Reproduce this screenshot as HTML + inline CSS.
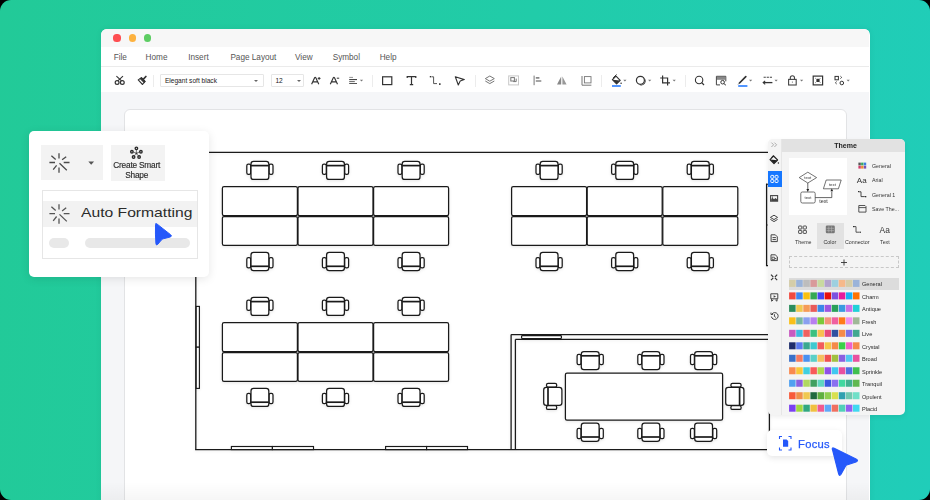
<!DOCTYPE html>
<html><head><meta charset="utf-8">
<style>
*{box-sizing:border-box}
html,body{margin:0;padding:0}
body{width:930px;height:500px;overflow:hidden;position:relative;background:#000;font-family:"Liberation Sans",sans-serif}
.abs{position:absolute}
#bg{position:absolute;left:0;top:0;width:930px;height:500px;border-radius:11px;background:linear-gradient(95deg,#22ca98 0%,#21cca9 55%,#20cdb9 100%)}
#win{position:absolute;left:101px;top:29px;width:768.5px;height:490px;background:#fff;border-radius:6px 6px 0 0;overflow:hidden;box-shadow:0 0 6px rgba(0,0,0,.06)}
#title{position:absolute;left:0;top:0;width:768px;height:18px;background:#f7f7f7}
.dot{position:absolute;top:5.4px;width:7.2px;height:7.2px;border-radius:50%}
#menu{position:absolute;left:0;top:18px;width:768px;height:20px;background:#fff;border-bottom:1px solid #ebebeb}
.mi{position:absolute;top:6.0px;font-size:8.2px;color:#555;white-space:nowrap}
#tb{position:absolute;left:0;top:38px;width:768px;height:25px;background:#fff}
#canvas{position:absolute;left:0;top:63px;width:768px;height:440px;background:#f5f6f8}
#page{position:absolute;left:22.5px;top:17px;width:723.5px;height:420px;background:#fff;border-radius:6px;border:1px solid #e2e3e5}
.sep{position:absolute;top:8px;width:1px;height:12px;background:#ececec}
.dd{position:absolute;top:8px;height:13px;border:1px solid #e6e6e6;border-radius:1px;background:#fff;font-size:6.6px;color:#222;padding:2.4px 0 0 3.9px;white-space:nowrap}
.caret{position:absolute;width:0;height:0;border-left:2px solid transparent;border-right:2px solid transparent;border-top:2px solid #666}
svg.ic{position:absolute}
#plan{position:absolute;left:0;top:0}
#lp{position:absolute;left:29px;top:131px;width:180px;height:146px;background:#fff;border-radius:5px;box-shadow:0 2px 10px rgba(0,0,0,.10)}
#tp{position:absolute;left:768px;top:139px;width:136.5px;height:275.5px;background:#f4f4f4;border-radius:5px;box-shadow:0 2px 5px rgba(0,0,0,.07);overflow:hidden}
.swl{position:absolute;left:862px;font-size:5.6px;color:#2a2a2a;white-space:nowrap}
.tl{position:absolute;font-size:5.3px;color:#333;white-space:nowrap}
#focus{position:absolute;left:767px;top:430.2px;width:75px;height:25.8px;background:#fff;border-radius:5px;box-shadow:0 2px 6px rgba(0,0,0,.10)}
</style></head><body>
<div id="bg"></div>
<div id="win">
  <div id="title">
    <div class="dot" style="left:12.4px;background:#fe4f52"></div>
    <div class="dot" style="left:27.6px;background:#fdb23f"></div>
    <div class="dot" style="left:42.9px;background:#5dcd63"></div>
  </div>
  <div id="menu">
    <div class="mi" style="left:12.7px">File</div>
    <div class="mi" style="left:44.6px">Home</div>
    <div class="mi" style="left:87.2px">Insert</div>
    <div class="mi" style="left:129.4px">Page Layout</div>
    <div class="mi" style="left:194px">View</div>
    <div class="mi" style="left:231.7px">Symbol</div>
    <div class="mi" style="left:278.7px">Help</div>
  </div>
  <div id="tb"></div>
  <div id="canvas"><div id="page"></div></div>
</div>

<div class="abs" style="left:101px;top:482px;width:768px;height:18px;background:linear-gradient(rgba(0,0,0,0),rgba(0,0,0,.035))"></div>
<!-- toolbar overlay in page coords -->
<div class="abs" style="left:0;top:0;width:930px;height:100px">
  <div class="sep" style="left:153px;top:74.5px"></div>
  <div class="dd" style="left:160px;top:74px;width:103.5px">Elegant soft black</div>
  <div class="caret" style="left:254.3px;top:79.8px"></div>
  <div class="dd" style="left:270.5px;top:74px;width:33px">12</div>
  <div class="caret" style="left:297.4px;top:79.8px"></div>
  <div class="sep" style="left:371.5px;top:74.5px"></div>
  <div class="sep" style="left:474.5px;top:74.5px"></div>
  <div class="sep" style="left:601px;top:74.5px"></div>
  <div class="sep" style="left:684.5px;top:74.5px"></div>
  <svg class="ic" style="left:0;top:0" width="930" height="100" viewBox="0 0 930 100" fill="none" stroke="#333" stroke-width="1.1">
    <!-- scissors -->
    <circle cx="117.1" cy="82.5" r="1.9" stroke-width="1.2"/><circle cx="122.3" cy="82.5" r="1.9" stroke-width="1.2"/>
    <path d="M117.8 80.8 L123 76.2 M121.6 80.8 L116.4 76.2" stroke-width="1.1"/>
    <!-- brush -->
    <path d="M138.2 79.9 L142.5 84.5 L145 81.4 L141.5 77.8 Z" stroke-width="1.1" stroke-linejoin="round"/>
    <path d="M140.3 78.6 L141.5 77.8 L145 81.4 L144.1 82.4 Z" fill="#333"/>
    <path d="M143.2 79.3 L145.9 76.5" stroke-width="1.7" stroke-linecap="round"/>
    <!-- A+ A- -->
    <path d="M311.6 84.3 L314.6 77.8 Q315.2 76.8 315.8 77.8 L318.8 84.3 M312.9 81.8 L317.5 81.8" stroke-width="1.15"/>
    <path d="M317.7 78.4 h2.8 M319.1 77 v2.8" stroke-width="1"/>
    <path d="M330.3 84.3 L333.3 77.8 Q333.9 76.8 334.5 77.8 L337.5 84.3 M331.6 81.8 L336.2 81.8" stroke-width="1.15"/>
    <path d="M336.8 78.2 h2.4" stroke-width="1"/>
    <!-- align -->
    <path d="M349.2 77.4 h3.8" stroke="#888" stroke-width=".9"/>
    <path d="M349.2 79.6 h7.8" stroke="#333" stroke-width="1"/>
    <path d="M349.2 81.6 h5.6" stroke="#666" stroke-width="1"/>
    <path d="M349.2 83.5 h7.8" stroke="#555" stroke-width="1"/>
    <path d="M359.9 79.8 h3.2 l-1.6 1.7z" fill="#777" stroke="none"/>
    <!-- rect -->
    <rect x="382.6" y="76.8" width="9.2" height="7.8" stroke-width="1.2"/>
    <!-- T -->
    <path d="M407.2 78 v-1.3 h8.6 v1.3 M411.5 76.7 v8 M409.8 84.7 h3.4" stroke-width="1.2"/>
    <!-- connector -->
    <path d="M431.6 76.8 h2 v6.8 h3.4" stroke="#555" stroke-width="1"/>
    <rect x="429.8" y="76" width="1.4" height="1.4" fill="#333" stroke="none"/><rect x="439" y="83.3" width="1.6" height="1.6" fill="#333" stroke="none"/>
    <!-- pointer -->
    <path d="M455.3 76.8 L464.3 79.6 L460.2 81 L458.3 85 Z" stroke-width="1.1" stroke-linejoin="round"/>
    <!-- layers -->
    <path d="M489.8 76 L494.3 78.6 L489.8 81.2 L485.3 78.6 Z" stroke="#777" stroke-width="1"/>
    <path d="M485.3 81 L489.8 83.6 L494.3 81" stroke="#777" stroke-width="1"/>
    <!-- group -->
    <rect x="508.7" y="75.9" width="9.8" height="9" stroke="#c8c8c8" stroke-width="1"/>
    <rect x="510.8" y="77.6" width="3.6" height="3.4" stroke="#777" stroke-width="1"/>
    <path d="M513.2 81.6 h3 v-3" stroke="#777" stroke-width="1"/>
    <!-- align left -->
    <path d="M534.1 75.6 v9.6" stroke="#777" stroke-width="1"/>
    <path d="M535.8 77.9 h3.6 M535.8 81 h5.5" stroke="#888" stroke-width="1.7"/>
    <!-- flip -->
    <path d="M561.2 76.6 L557 84.5 h4.2z" fill="#888" stroke="none"/>
    <path d="M562.4 76.6 L566.6 84.5 h-4.2z" fill="#999" stroke="none"/>
    <!-- frame -->
    <path d="M582 76 v9.2 h9.4" stroke="#777" stroke-width="1"/>
    <rect x="584.4" y="76.6" width="6.6" height="6.3" stroke="#777" stroke-width=".9"/>
    <!-- bucket -->
    <path d="M613.4 77.6 L616.3 74.8" stroke="#333" stroke-width="1" stroke-linecap="round"/>
    <path d="M616 76.1 L620.2 80.3 L616.6 83.9 L612.4 79.7 Z" stroke="#333" stroke-width="1.2" stroke-linejoin="round"/>
    <path d="M612.6 79.8 L620 80.4 L616.6 83.8Z" fill="#333" stroke="none"/>
    <circle cx="621.1" cy="83.3" r=".8" fill="#333" stroke="none"/>
    <path d="M612 86 h8.8" stroke="#1a73ff" stroke-width="1.5"/>
    <path d="M623.3 79.8 h3.2 l-1.6 1.7z" fill="#777" stroke="none"/>
    <!-- shadow circle -->
    <circle cx="640.4" cy="80.3" r="4" stroke-width="1.2"/>
    <path d="M643.6 77.3 A4.3 4.3 0 0 1 639 84.8 A4.7 4.7 0 0 0 645 80.8 A4.5 4.5 0 0 0 643.6 77.3Z" fill="#333" stroke="none"/>
    <path d="M648.1 79.8 h3.2 l-1.6 1.7z" fill="#777" stroke="none"/>
    <!-- crop -->
    <path d="M662.6 75.6 v7.2 h7.4 M660.2 78 h7.4 v7.4" stroke-width="1.2"/>
    <path d="M672.6 79.8 h3.2 l-1.6 1.7z" fill="#777" stroke="none"/>
    <!-- search -->
    <circle cx="699.1" cy="80" r="3.7" stroke-width="1.1"/>
    <path d="M701.7 82.6 L704 85" stroke-width="1.2"/>
    <!-- find doc -->
    <path d="M720 84.9 h-3.6 v-8.6 h9.4 v5" stroke="#444" stroke-width="1"/>
    <rect x="717" y="76.8" width="8.4" height="3" fill="#888" stroke="none"/>
    <circle cx="722.6" cy="82.2" r="1.8" stroke-width="1"/>
    <path d="M723.9 83.6 l2 1.6" stroke-width="1"/>
    <!-- pen -->
    <path d="M739.5 83 L745.8 76.6" stroke-width="1.7" stroke-linecap="round"/>
    <path d="M738.2 84.4 L739.3 83.2" stroke="#666" stroke-width="1"/>
    <path d="M738.2 86 h9.2" stroke="#1a73ff" stroke-width="1.5"/>
    <path d="M749 79.8 h3.2 l-1.6 1.7z" fill="#777" stroke="none"/>
    <!-- line style -->
    <path d="M763.6 77.3 h8.6" stroke-dasharray="2.2 .9" stroke="#444" stroke-width="1.1"/>
    <path d="M763.6 82.6 h8.8" stroke-width="1.3"/>
    <path d="M765.2 80.9 L763.2 82.6 L765.2 84.3" stroke-width="1.1"/>
    <path d="M774.5 79.8 h3.2 l-1.6 1.7z" fill="#777" stroke="none"/>
    <!-- lock -->
    <rect x="788.6" y="79.4" width="7.6" height="5.6" stroke="#444" stroke-width="1.1"/>
    <path d="M790.3 79.4 v-1.6 a2.1 2.1 0 0 1 4.2 0 v1.6" stroke="#444" stroke-width="1.1"/>
    <rect x="791.9" y="81.6" width="1" height="1" fill="#666" stroke="none"/>
    <path d="M800 79.8 h3.2 l-1.6 1.7z" fill="#777" stroke="none"/>
    <!-- fit -->
    <rect x="813.2" y="76.1" width="9.4" height="8.8" stroke-width="1.2"/>
    <rect x="816.4" y="78.8" width="3.2" height="3.2" fill="#333" stroke="none"/>
    <path d="M815.2 78 l.6 .6 M820.6 78 l-.6 .6 M815.2 82.9 l.6 -.6 M820.6 82.9 l-.6 -.6" stroke-width=".8"/>
    <!-- more -->
    <rect x="835" y="76.4" width="3.4" height="3.4" stroke-width="1"/>
    <circle cx="841.8" cy="83" r="1.8" stroke-width="1"/>
    <path d="M840.4 76.2 l1.3 1.2 l-1.3 1.2 M836.7 81.6 l-1.3 1.2 l1.3 1.2" stroke-width=".9"/>
    <path d="M846.6 79.8 h3.2 l-1.6 1.7z" fill="#777" stroke="none"/>
  </svg>
</div>

<svg id="plan" width="930" height="500" viewBox="0 0 930 500">

<g style="filter:drop-shadow(0 1.5px 1.5px rgba(0,0,0,.08))">
<g fill="none" stroke="#1a1a1a" stroke-width="1.3">
<line x1="195.8" y1="152.4" x2="768" y2="152.4"/>
<line x1="195.8" y1="152.4" x2="195.8" y2="449.6"/>
<line x1="195.1" y1="449.6" x2="768" y2="449.6"/>
<line x1="511.1" y1="334.6" x2="768" y2="334.6"/>
<line x1="515.4" y1="339.4" x2="768" y2="339.4"/>
<line x1="511.1" y1="334.6" x2="511.1" y2="449.6"/>
<line x1="515.4" y1="339.4" x2="515.4" y2="449.6"/>
<line x1="766.6" y1="183.7" x2="766.6" y2="266"/>
<path d="M766 184.2 h2.5 M766 265.6 h2.5 M766 225 h1.6" stroke-width="1.1"/>
<line x1="769.4" y1="339.4" x2="769.4" y2="449.6"/>
</g>
<g fill="#fff" stroke="#1a1a1a" stroke-width="1.15">
<rect x="196.2" y="306.4" width="3.2" height="40.8"/>
<rect x="196.2" y="347.2" width="3.2" height="41.2"/>
<rect x="231.4" y="446.5" width="41" height="3.1"/>
<rect x="272.4" y="446.5" width="41.1" height="3.1"/>
<rect x="385.6" y="446.5" width="41" height="3.1"/>
<rect x="426.6" y="446.5" width="40.9" height="3.1"/>
<rect x="521.6" y="335.7" width="39.8" height="2.9" rx=".8" stroke-width="1.2"/>
</g></g>
<g fill="#fff" stroke="#1a1a1a" stroke-width="1.25" style="filter:drop-shadow(0 1.5px 1.5px rgba(0,0,0,.10))"><rect x="222.4" y="186.6" width="75" height="29.0" rx="1.6"/><rect x="222.4" y="216.5" width="75" height="28.9" rx="1.6"/><g transform="translate(259.9,170.4) rotate(0)"><rect x="-13.1" y="-6.3" width="3.9" height="10.2" rx="1.6"/><rect x="9.2" y="-6.3" width="3.9" height="10.2" rx="1.6"/><rect x="-8.9" y="-9.1" width="17.8" height="18.2" rx="2.6"/><line x1="-8.9" y1="-4.8" x2="8.9" y2="-4.8" stroke-width="1.7"/></g><g transform="translate(259.9,261.5) rotate(180)"><rect x="-13.1" y="-6.3" width="3.9" height="10.2" rx="1.6"/><rect x="9.2" y="-6.3" width="3.9" height="10.2" rx="1.6"/><rect x="-8.9" y="-9.1" width="17.8" height="18.2" rx="2.6"/><line x1="-8.9" y1="-4.8" x2="8.9" y2="-4.8" stroke-width="1.7"/></g><rect x="298.0" y="186.6" width="75" height="29.0" rx="1.6"/><rect x="298.0" y="216.5" width="75" height="28.9" rx="1.6"/><g transform="translate(335.5,170.4) rotate(0)"><rect x="-13.1" y="-6.3" width="3.9" height="10.2" rx="1.6"/><rect x="9.2" y="-6.3" width="3.9" height="10.2" rx="1.6"/><rect x="-8.9" y="-9.1" width="17.8" height="18.2" rx="2.6"/><line x1="-8.9" y1="-4.8" x2="8.9" y2="-4.8" stroke-width="1.7"/></g><g transform="translate(335.5,261.5) rotate(180)"><rect x="-13.1" y="-6.3" width="3.9" height="10.2" rx="1.6"/><rect x="9.2" y="-6.3" width="3.9" height="10.2" rx="1.6"/><rect x="-8.9" y="-9.1" width="17.8" height="18.2" rx="2.6"/><line x1="-8.9" y1="-4.8" x2="8.9" y2="-4.8" stroke-width="1.7"/></g><rect x="373.6" y="186.6" width="75" height="29.0" rx="1.6"/><rect x="373.6" y="216.5" width="75" height="28.9" rx="1.6"/><g transform="translate(411.1,170.4) rotate(0)"><rect x="-13.1" y="-6.3" width="3.9" height="10.2" rx="1.6"/><rect x="9.2" y="-6.3" width="3.9" height="10.2" rx="1.6"/><rect x="-8.9" y="-9.1" width="17.8" height="18.2" rx="2.6"/><line x1="-8.9" y1="-4.8" x2="8.9" y2="-4.8" stroke-width="1.7"/></g><g transform="translate(411.1,261.5) rotate(180)"><rect x="-13.1" y="-6.3" width="3.9" height="10.2" rx="1.6"/><rect x="9.2" y="-6.3" width="3.9" height="10.2" rx="1.6"/><rect x="-8.9" y="-9.1" width="17.8" height="18.2" rx="2.6"/><line x1="-8.9" y1="-4.8" x2="8.9" y2="-4.8" stroke-width="1.7"/></g><rect x="511.6" y="186.6" width="75" height="29.0" rx="1.6"/><rect x="511.6" y="216.5" width="75" height="28.9" rx="1.6"/><g transform="translate(549.1,170.4) rotate(0)"><rect x="-13.1" y="-6.3" width="3.9" height="10.2" rx="1.6"/><rect x="9.2" y="-6.3" width="3.9" height="10.2" rx="1.6"/><rect x="-8.9" y="-9.1" width="17.8" height="18.2" rx="2.6"/><line x1="-8.9" y1="-4.8" x2="8.9" y2="-4.8" stroke-width="1.7"/></g><g transform="translate(549.1,261.5) rotate(180)"><rect x="-13.1" y="-6.3" width="3.9" height="10.2" rx="1.6"/><rect x="9.2" y="-6.3" width="3.9" height="10.2" rx="1.6"/><rect x="-8.9" y="-9.1" width="17.8" height="18.2" rx="2.6"/><line x1="-8.9" y1="-4.8" x2="8.9" y2="-4.8" stroke-width="1.7"/></g><rect x="587.2" y="186.6" width="75" height="29.0" rx="1.6"/><rect x="587.2" y="216.5" width="75" height="28.9" rx="1.6"/><g transform="translate(624.7,170.4) rotate(0)"><rect x="-13.1" y="-6.3" width="3.9" height="10.2" rx="1.6"/><rect x="9.2" y="-6.3" width="3.9" height="10.2" rx="1.6"/><rect x="-8.9" y="-9.1" width="17.8" height="18.2" rx="2.6"/><line x1="-8.9" y1="-4.8" x2="8.9" y2="-4.8" stroke-width="1.7"/></g><g transform="translate(624.7,261.5) rotate(180)"><rect x="-13.1" y="-6.3" width="3.9" height="10.2" rx="1.6"/><rect x="9.2" y="-6.3" width="3.9" height="10.2" rx="1.6"/><rect x="-8.9" y="-9.1" width="17.8" height="18.2" rx="2.6"/><line x1="-8.9" y1="-4.8" x2="8.9" y2="-4.8" stroke-width="1.7"/></g><rect x="662.8" y="186.6" width="75" height="29.0" rx="1.6"/><rect x="662.8" y="216.5" width="75" height="28.9" rx="1.6"/><g transform="translate(700.3,170.4) rotate(0)"><rect x="-13.1" y="-6.3" width="3.9" height="10.2" rx="1.6"/><rect x="9.2" y="-6.3" width="3.9" height="10.2" rx="1.6"/><rect x="-8.9" y="-9.1" width="17.8" height="18.2" rx="2.6"/><line x1="-8.9" y1="-4.8" x2="8.9" y2="-4.8" stroke-width="1.7"/></g><g transform="translate(700.3,261.5) rotate(180)"><rect x="-13.1" y="-6.3" width="3.9" height="10.2" rx="1.6"/><rect x="9.2" y="-6.3" width="3.9" height="10.2" rx="1.6"/><rect x="-8.9" y="-9.1" width="17.8" height="18.2" rx="2.6"/><line x1="-8.9" y1="-4.8" x2="8.9" y2="-4.8" stroke-width="1.7"/></g><rect x="222.4" y="322.6" width="75" height="29.0" rx="1.6"/><rect x="222.4" y="352.5" width="75" height="28.9" rx="1.6"/><g transform="translate(259.9,306.4) rotate(0)"><rect x="-13.1" y="-6.3" width="3.9" height="10.2" rx="1.6"/><rect x="9.2" y="-6.3" width="3.9" height="10.2" rx="1.6"/><rect x="-8.9" y="-9.1" width="17.8" height="18.2" rx="2.6"/><line x1="-8.9" y1="-4.8" x2="8.9" y2="-4.8" stroke-width="1.7"/></g><g transform="translate(259.9,397.4) rotate(180)"><rect x="-13.1" y="-6.3" width="3.9" height="10.2" rx="1.6"/><rect x="9.2" y="-6.3" width="3.9" height="10.2" rx="1.6"/><rect x="-8.9" y="-9.1" width="17.8" height="18.2" rx="2.6"/><line x1="-8.9" y1="-4.8" x2="8.9" y2="-4.8" stroke-width="1.7"/></g><rect x="298.0" y="322.6" width="75" height="29.0" rx="1.6"/><rect x="298.0" y="352.5" width="75" height="28.9" rx="1.6"/><g transform="translate(335.5,306.4) rotate(0)"><rect x="-13.1" y="-6.3" width="3.9" height="10.2" rx="1.6"/><rect x="9.2" y="-6.3" width="3.9" height="10.2" rx="1.6"/><rect x="-8.9" y="-9.1" width="17.8" height="18.2" rx="2.6"/><line x1="-8.9" y1="-4.8" x2="8.9" y2="-4.8" stroke-width="1.7"/></g><g transform="translate(335.5,397.4) rotate(180)"><rect x="-13.1" y="-6.3" width="3.9" height="10.2" rx="1.6"/><rect x="9.2" y="-6.3" width="3.9" height="10.2" rx="1.6"/><rect x="-8.9" y="-9.1" width="17.8" height="18.2" rx="2.6"/><line x1="-8.9" y1="-4.8" x2="8.9" y2="-4.8" stroke-width="1.7"/></g><rect x="373.6" y="322.6" width="75" height="29.0" rx="1.6"/><rect x="373.6" y="352.5" width="75" height="28.9" rx="1.6"/><g transform="translate(411.1,306.4) rotate(0)"><rect x="-13.1" y="-6.3" width="3.9" height="10.2" rx="1.6"/><rect x="9.2" y="-6.3" width="3.9" height="10.2" rx="1.6"/><rect x="-8.9" y="-9.1" width="17.8" height="18.2" rx="2.6"/><line x1="-8.9" y1="-4.8" x2="8.9" y2="-4.8" stroke-width="1.7"/></g><g transform="translate(411.1,397.4) rotate(180)"><rect x="-13.1" y="-6.3" width="3.9" height="10.2" rx="1.6"/><rect x="9.2" y="-6.3" width="3.9" height="10.2" rx="1.6"/><rect x="-8.9" y="-9.1" width="17.8" height="18.2" rx="2.6"/><line x1="-8.9" y1="-4.8" x2="8.9" y2="-4.8" stroke-width="1.7"/></g><rect x="565.4" y="373.2" width="157.2" height="46.8" rx="1.6"/><g transform="translate(590.2,360.6) rotate(0)"><rect x="-13.1" y="-6.3" width="3.9" height="10.2" rx="1.6"/><rect x="9.2" y="-6.3" width="3.9" height="10.2" rx="1.6"/><rect x="-8.9" y="-9.1" width="17.8" height="18.2" rx="2.6"/><line x1="-8.9" y1="-4.8" x2="8.9" y2="-4.8" stroke-width="1.7"/></g><g transform="translate(590.2,432.2) rotate(180)"><rect x="-13.1" y="-6.3" width="3.9" height="10.2" rx="1.6"/><rect x="9.2" y="-6.3" width="3.9" height="10.2" rx="1.6"/><rect x="-8.9" y="-9.1" width="17.8" height="18.2" rx="2.6"/><line x1="-8.9" y1="-4.8" x2="8.9" y2="-4.8" stroke-width="1.7"/></g><g transform="translate(650.9,360.6) rotate(0)"><rect x="-13.1" y="-6.3" width="3.9" height="10.2" rx="1.6"/><rect x="9.2" y="-6.3" width="3.9" height="10.2" rx="1.6"/><rect x="-8.9" y="-9.1" width="17.8" height="18.2" rx="2.6"/><line x1="-8.9" y1="-4.8" x2="8.9" y2="-4.8" stroke-width="1.7"/></g><g transform="translate(650.9,432.2) rotate(180)"><rect x="-13.1" y="-6.3" width="3.9" height="10.2" rx="1.6"/><rect x="9.2" y="-6.3" width="3.9" height="10.2" rx="1.6"/><rect x="-8.9" y="-9.1" width="17.8" height="18.2" rx="2.6"/><line x1="-8.9" y1="-4.8" x2="8.9" y2="-4.8" stroke-width="1.7"/></g><g transform="translate(703.6,360.6) rotate(0)"><rect x="-13.1" y="-6.3" width="3.9" height="10.2" rx="1.6"/><rect x="9.2" y="-6.3" width="3.9" height="10.2" rx="1.6"/><rect x="-8.9" y="-9.1" width="17.8" height="18.2" rx="2.6"/><line x1="-8.9" y1="-4.8" x2="8.9" y2="-4.8" stroke-width="1.7"/></g><g transform="translate(703.6,432.2) rotate(180)"><rect x="-13.1" y="-6.3" width="3.9" height="10.2" rx="1.6"/><rect x="9.2" y="-6.3" width="3.9" height="10.2" rx="1.6"/><rect x="-8.9" y="-9.1" width="17.8" height="18.2" rx="2.6"/><line x1="-8.9" y1="-4.8" x2="8.9" y2="-4.8" stroke-width="1.7"/></g><g transform="translate(552.8,396.4) rotate(-90)"><rect x="-13.1" y="-6.3" width="3.9" height="10.2" rx="1.6"/><rect x="9.2" y="-6.3" width="3.9" height="10.2" rx="1.6"/><rect x="-8.9" y="-9.1" width="17.8" height="18.2" rx="2.6"/><line x1="-8.9" y1="-4.8" x2="8.9" y2="-4.8" stroke-width="1.7"/></g><g transform="translate(734.8,396.4) rotate(90)"><rect x="-13.1" y="-6.3" width="3.9" height="10.2" rx="1.6"/><rect x="9.2" y="-6.3" width="3.9" height="10.2" rx="1.6"/><rect x="-8.9" y="-9.1" width="17.8" height="18.2" rx="2.6"/><line x1="-8.9" y1="-4.8" x2="8.9" y2="-4.8" stroke-width="1.7"/></g></g>
</svg>

<!-- left panel -->
<div id="lp">
  <div class="abs" style="left:12px;top:14.3px;width:61.6px;height:35px;background:#f3f3f3"></div>
  <div class="abs" style="left:82px;top:14.1px;width:53.8px;height:35.6px;background:#f3f3f3"></div>
  <div class="abs" style="left:13.4px;top:59.4px;width:155.2px;height:68.8px;border:1px solid #e6e6e6"></div>
  <div class="abs" style="left:14px;top:69.9px;width:154px;height:25.7px;background:#f2f2f2"></div>
  <div class="abs" style="left:19.9px;top:106.6px;width:20px;height:10.3px;border-radius:5px;background:#e8e8e8"></div>
  <div class="abs" style="left:55.9px;top:106.6px;width:105.5px;height:10.3px;border-radius:5px;background:#e8e8e8"></div>
  <div class="abs" style="left:52px;top:73.6px;font-size:13.5px;color:#2b2b2b;white-space:nowrap;transform:scaleX(1.16);transform-origin:0 0">Auto Formatting</div>
  <div class="abs" style="left:77.7px;top:29px;width:60px;text-align:center;font-size:8.3px;line-height:10px;letter-spacing:-0.2px;color:#2a2a2a;-webkit-text-stroke:.15px #2a2a2a">Create Smart<br>Shape</div>
</div>
<svg class="ic" style="left:0;top:0" width="930" height="500" viewBox="0 0 930 500" fill="none" stroke="#4a4a4a" stroke-width="1.3" stroke-linecap="butt">
  <!-- sparkle 1 -->
  <g transform="translate(59,162.5)">
    <path d="M0 -9.3 v5.2 M0 4.9 v5.3 M-9.6 0 h5.6 M4.7 0 h5.8 M-7.6 -6.8 L-3.3 -3.1 M3.1 -2.7 L7.2 -5.8 M-5.8 7.2 L-2.4 2.9 M0.5 0.8 L7.8 7.8"/>
  </g>
  <path d="M88.3 161.5 h5.8 l-2.9 3.2z" fill="#555" stroke="none"/>
  <g transform="translate(59,213.6)" stroke="#555">
    <path d="M0 -9.3 v5.2 M0 4.9 v5.3 M-9.6 0 h5.6 M4.7 0 h5.8 M-7.6 -6.8 L-3.3 -3.1 M3.1 -2.7 L7.2 -5.8 M-5.8 7.2 L-2.4 2.9 M0.5 0.8 L7.8 7.8"/>
  </g>
  <!-- smart shape icon -->
  <g transform="translate(136.4,153)" stroke="#2a2a2a" stroke-width="1.35">
    <circle cx="0" cy="-4.7" r="1.25"/><circle cx="-4.5" cy="-1.3" r="1.25"/><circle cx="4.5" cy="-1.3" r="1.25"/>
    <circle cx="-2.8" cy="4" r="1.25"/><circle cx="2.7" cy="4" r="1.25"/><rect x="-1" y="-0.6" width="2" height="2" fill="#333" stroke="none"/>
    <path d="M0 -3.4 v2.8 M-3.2 -1 l2.2 .8 M3.2 -1 l-2.2 .8 M-2 2.8 l1 -1.4 M2 2.8 l-1 -1.4" stroke-width=".6"/>
  </g>
</svg>
<!-- cursor 1 -->
<svg class="ic" style="left:0;top:0" width="930" height="500" viewBox="0 0 930 500">
  <path d="M155.5 224.6 Q155.3 222.9 156.9 223.9 L170.6 234.7 Q172.5 236.3 170.2 237 L163.6 238.7 Q162.1 239.1 161.3 240.1 L157.8 244.3 Q156.1 246 155.9 243.6 Q155.2 234 155.5 224.6 Z" fill="#2558fa" stroke="#2558fa" stroke-width="1" stroke-linejoin="round"/>
</svg>

<!-- theme panel -->
<div id="tp">
  <div class="abs" style="left:0;top:0;width:14px;height:276px;background:#f4f4f4;border-right:1px solid #e6e6e6"></div>
  <div class="abs" style="left:14px;top:0;width:123px;height:13px;background:#e2e2e2"></div>
  <div class="abs" style="left:0;top:32.4px;width:13.8px;height:15.4px;background:#1677ff"></div>
  <div class="abs" style="left:16px;top:2.5px;width:123px;text-align:center;font-size:7px;font-weight:bold;color:#222">Theme</div>
  <div class="abs" style="left:21.4px;top:19.4px;width:57.3px;height:56.8px;background:#fff"></div>
  <div class="abs" style="left:48.9px;top:83.7px;width:27.2px;height:26px;background:#e2e2e2"></div>
  <div class="abs" style="left:21.4px;top:117.2px;width:109.3px;height:11.9px;border:1px dashed #c8c8c8"></div>
</div>
<div class="tl" style="left:872px;top:163px">General</div>
<div class="tl" style="left:872px;top:177.4px">Arial</div>
<div class="tl" style="left:872px;top:191.8px">General 1</div>
<div class="tl" style="left:872px;top:206.2px">Save The...</div>
<div class="tl" style="left:795px;top:239.3px">Theme</div>
<div class="tl" style="left:823.5px;top:239.3px">Color</div>
<div class="tl" style="left:845px;top:239.3px">Connector</div>
<div class="tl" style="left:880px;top:239.3px">Text</div>
<div class="tl" style="left:879.6px;top:225.4px;font-size:8.4px;color:#333">Aa</div>
<div class="tl" style="left:856.8px;top:176px;font-size:8px;color:#333">Aa</div>
<div style="position:absolute;left:789px;top:277.6px;width:110px;height:12.1px;background:#dcdcdc"></div><div class="swl" style="top:281.40px">General</div><div class="swl" style="top:293.88px">Charm</div><div class="swl" style="top:306.36px">Antique</div><div class="swl" style="top:318.84px">Fresh</div><div class="swl" style="top:331.32px">Live</div><div class="swl" style="top:343.80px">Crystal</div><div class="swl" style="top:356.28px">Broad</div><div class="swl" style="top:368.76px">Sprinkle</div><div class="swl" style="top:381.24px">Tranquil</div><div class="swl" style="top:393.72px">Opulent</div><div class="swl" style="top:406.20px">Placid</div><svg class="ic" style="left:0;top:0" width="930" height="500" viewBox="0 0 930 500"><rect x="789.10" y="279.90" width="6.5" height="7" fill="#d4cda8"/><rect x="796.20" y="279.90" width="6.5" height="7" fill="#9ab3d9"/><rect x="803.30" y="279.90" width="6.5" height="7" fill="#bdbdbd"/><rect x="810.40" y="279.90" width="6.5" height="7" fill="#d99a9a"/><rect x="817.50" y="279.90" width="6.5" height="7" fill="#c9d9a0"/><rect x="824.60" y="279.90" width="6.5" height="7" fill="#b3a3cc"/><rect x="831.70" y="279.90" width="6.5" height="7" fill="#9dd0e0"/><rect x="838.80" y="279.90" width="6.5" height="7" fill="#f6b98a"/><rect x="845.90" y="279.90" width="6.5" height="7" fill="#d4cda8"/><rect x="853.00" y="279.90" width="6.5" height="7" fill="#9ab3d9"/><rect x="789.10" y="292.38" width="6.5" height="7" fill="#f04a3f"/><rect x="796.20" y="292.38" width="6.5" height="7" fill="#3d87f0"/><rect x="803.30" y="292.38" width="6.5" height="7" fill="#f9c00e"/><rect x="810.40" y="292.38" width="6.5" height="7" fill="#35a853"/><rect x="817.50" y="292.38" width="6.5" height="7" fill="#4747f0"/><rect x="824.60" y="292.38" width="6.5" height="7" fill="#e8100e"/><rect x="831.70" y="292.38" width="6.5" height="7" fill="#7c52e0"/><rect x="838.80" y="292.38" width="6.5" height="7" fill="#e61b9c"/><rect x="845.90" y="292.38" width="6.5" height="7" fill="#1ab0f5"/><rect x="853.00" y="292.38" width="6.5" height="7" fill="#ff7300"/><rect x="789.10" y="304.86" width="6.5" height="7" fill="#2a8c5b"/><rect x="796.20" y="304.86" width="6.5" height="7" fill="#f0c850"/><rect x="803.30" y="304.86" width="6.5" height="7" fill="#f59b56"/><rect x="810.40" y="304.86" width="6.5" height="7" fill="#e85a5a"/><rect x="817.50" y="304.86" width="6.5" height="7" fill="#3b87e8"/><rect x="824.60" y="304.86" width="6.5" height="7" fill="#9e55e0"/><rect x="831.70" y="304.86" width="6.5" height="7" fill="#2aa05a"/><rect x="838.80" y="304.86" width="6.5" height="7" fill="#3a9ae0"/><rect x="845.90" y="304.86" width="6.5" height="7" fill="#c870e8"/><rect x="853.00" y="304.86" width="6.5" height="7" fill="#20d0d8"/><rect x="789.10" y="317.34" width="6.5" height="7" fill="#f9c01a"/><rect x="796.20" y="317.34" width="6.5" height="7" fill="#77b8a0"/><rect x="803.30" y="317.34" width="6.5" height="7" fill="#8aa0f0"/><rect x="810.40" y="317.34" width="6.5" height="7" fill="#b880f0"/><rect x="817.50" y="317.34" width="6.5" height="7" fill="#7cc83a"/><rect x="824.60" y="317.34" width="6.5" height="7" fill="#f5947a"/><rect x="831.70" y="317.34" width="6.5" height="7" fill="#f060a0"/><rect x="838.80" y="317.34" width="6.5" height="7" fill="#ff7a1a"/><rect x="845.90" y="317.34" width="6.5" height="7" fill="#f090f0"/><rect x="853.00" y="317.34" width="6.5" height="7" fill="#a0b898"/><rect x="789.10" y="329.82" width="6.5" height="7" fill="#c85ac0"/><rect x="796.20" y="329.82" width="6.5" height="7" fill="#40b8e0"/><rect x="803.30" y="329.82" width="6.5" height="7" fill="#f06060"/><rect x="810.40" y="329.82" width="6.5" height="7" fill="#3cc080"/><rect x="817.50" y="329.82" width="6.5" height="7" fill="#f8c050"/><rect x="824.60" y="329.82" width="6.5" height="7" fill="#e84a7a"/><rect x="831.70" y="329.82" width="6.5" height="7" fill="#3050a0"/><rect x="838.80" y="329.82" width="6.5" height="7" fill="#f58a4a"/><rect x="845.90" y="329.82" width="6.5" height="7" fill="#7a70e8"/><rect x="853.00" y="329.82" width="6.5" height="7" fill="#40a890"/><rect x="789.10" y="342.30" width="6.5" height="7" fill="#1f2d6b"/><rect x="796.20" y="342.30" width="6.5" height="7" fill="#5a7af0"/><rect x="803.30" y="342.30" width="6.5" height="7" fill="#3aa890"/><rect x="810.40" y="342.30" width="6.5" height="7" fill="#40c8d0"/><rect x="817.50" y="342.30" width="6.5" height="7" fill="#f25c5c"/><rect x="824.60" y="342.30" width="6.5" height="7" fill="#f5c84a"/><rect x="831.70" y="342.30" width="6.5" height="7" fill="#f58a4a"/><rect x="838.80" y="342.30" width="6.5" height="7" fill="#3ad04a"/><rect x="845.90" y="342.30" width="6.5" height="7" fill="#f060c8"/><rect x="853.00" y="342.30" width="6.5" height="7" fill="#f58a4a"/><rect x="789.10" y="354.78" width="6.5" height="7" fill="#3a70c8"/><rect x="796.20" y="354.78" width="6.5" height="7" fill="#f57a60"/><rect x="803.30" y="354.78" width="6.5" height="7" fill="#4a90f0"/><rect x="810.40" y="354.78" width="6.5" height="7" fill="#5ad0c8"/><rect x="817.50" y="354.78" width="6.5" height="7" fill="#f5c060"/><rect x="824.60" y="354.78" width="6.5" height="7" fill="#f05050"/><rect x="831.70" y="354.78" width="6.5" height="7" fill="#a0c040"/><rect x="838.80" y="354.78" width="6.5" height="7" fill="#8a60e0"/><rect x="845.90" y="354.78" width="6.5" height="7" fill="#50c8f0"/><rect x="853.00" y="354.78" width="6.5" height="7" fill="#e850a0"/><rect x="789.10" y="367.26" width="6.5" height="7" fill="#f98a50"/><rect x="796.20" y="367.26" width="6.5" height="7" fill="#f9c83a"/><rect x="803.30" y="367.26" width="6.5" height="7" fill="#40d0e0"/><rect x="810.40" y="367.26" width="6.5" height="7" fill="#f85a5a"/><rect x="817.50" y="367.26" width="6.5" height="7" fill="#b0d850"/><rect x="824.60" y="367.26" width="6.5" height="7" fill="#9050e8"/><rect x="831.70" y="367.26" width="6.5" height="7" fill="#40c8f0"/><rect x="838.80" y="367.26" width="6.5" height="7" fill="#e850a0"/><rect x="845.90" y="367.26" width="6.5" height="7" fill="#5070e0"/><rect x="853.00" y="367.26" width="6.5" height="7" fill="#40c050"/><rect x="789.10" y="379.74" width="6.5" height="7" fill="#50a0f0"/><rect x="796.20" y="379.74" width="6.5" height="7" fill="#8a60e0"/><rect x="803.30" y="379.74" width="6.5" height="7" fill="#b0d860"/><rect x="810.40" y="379.74" width="6.5" height="7" fill="#40a060"/><rect x="817.50" y="379.74" width="6.5" height="7" fill="#60d8c0"/><rect x="824.60" y="379.74" width="6.5" height="7" fill="#3a5ae0"/><rect x="831.70" y="379.74" width="6.5" height="7" fill="#8a70f0"/><rect x="838.80" y="379.74" width="6.5" height="7" fill="#40d8a0"/><rect x="845.90" y="379.74" width="6.5" height="7" fill="#40b090"/><rect x="853.00" y="379.74" width="6.5" height="7" fill="#60b850"/><rect x="789.10" y="392.22" width="6.5" height="7" fill="#f85a3a"/><rect x="796.20" y="392.22" width="6.5" height="7" fill="#f0904a"/><rect x="803.30" y="392.22" width="6.5" height="7" fill="#f0c850"/><rect x="810.40" y="392.22" width="6.5" height="7" fill="#206a40"/><rect x="817.50" y="392.22" width="6.5" height="7" fill="#60b040"/><rect x="824.60" y="392.22" width="6.5" height="7" fill="#90d050"/><rect x="831.70" y="392.22" width="6.5" height="7" fill="#d8e050"/><rect x="838.80" y="392.22" width="6.5" height="7" fill="#30a0b0"/><rect x="845.90" y="392.22" width="6.5" height="7" fill="#70c8b0"/><rect x="853.00" y="392.22" width="6.5" height="7" fill="#70e0c8"/><rect x="789.10" y="404.70" width="6.5" height="7" fill="#7a40f0"/><rect x="796.20" y="404.70" width="6.5" height="7" fill="#a0d840"/><rect x="803.30" y="404.70" width="6.5" height="7" fill="#30a880"/><rect x="810.40" y="404.70" width="6.5" height="7" fill="#f0c040"/><rect x="817.50" y="404.70" width="6.5" height="7" fill="#f05a90"/><rect x="824.60" y="404.70" width="6.5" height="7" fill="#60a8f8"/><rect x="831.70" y="404.70" width="6.5" height="7" fill="#f07060"/><rect x="838.80" y="404.70" width="6.5" height="7" fill="#50d0b8"/><rect x="845.90" y="404.70" width="6.5" height="7" fill="#9060f0"/><rect x="853.00" y="404.70" width="6.5" height="7" fill="#40d8f0"/></svg>
<svg class="ic" style="left:0;top:0" width="930" height="500" viewBox="0 0 930 500" fill="none" stroke="#444" stroke-width="1">
  <!-- >> -->
  <path d="M771.4 142.6 l2.2 2.2 l-2.2 2.2 M774.4 142.6 l2.2 2.2 l-2.2 2.2" stroke="#999" stroke-width=".8"/>
  <!-- bucket -->
  <path d="M771.6 157.4 L773.2 155.6" stroke="#222" stroke-width="1" stroke-linecap="round"/>
  <path d="M773.6 156 L777.6 160 L774 163.6 L770 159.6 Z" stroke="#222" stroke-width="1.1" stroke-linejoin="round"/>
  <path d="M770.2 159.6 L777.4 160.2 L774 163.5Z" fill="#222" stroke="none"/>
  <circle cx="778.4" cy="163" r=".75" fill="#222" stroke="none"/>
  <!-- grid active -->
  <g stroke="#fff" stroke-width=".95">
    <rect x="770.8" y="175.4" width="2.9" height="2.9" rx=".7"/><rect x="775.1" y="175.4" width="2.9" height="2.9" rx=".7"/>
    <rect x="770.8" y="179.6" width="2.9" height="2.9" rx=".7"/><rect x="775.1" y="179.6" width="2.9" height="2.9" rx=".7"/>
  </g>
  <!-- image -->
  <rect x="770.6" y="195.6" width="7" height="5.6" stroke="#444" stroke-width="1.1"/>
  <path d="M771.2 201 v-2 l1.3 -1.2 l1.5 1.4 l1.5 -1.3 l1.8 1.5 v1.6z" fill="#444" stroke="none"/>
  <rect x="772" y="196.6" width="1" height="1" fill="#444" stroke="none"/>
  <!-- layers -->
  <path d="M774 215.2 L777.6 217.4 L774 219.6 L770.4 217.4 Z M770.4 219.4 L774 221.6 L777.6 219.4" stroke="#444" stroke-width="1"/>
  <!-- doc -->
  <path d="M771.1 234.8 h4.2 l2 2 v4.8 h-6.2 z M772.5 237.6 h3.4 M772.5 239.6 h3.4" stroke="#444" stroke-width="1"/>
  <!-- doc2 -->
  <path d="M771 254.8 h4.2 l2.2 2 v3.8 h-6.4 z" stroke="#444" stroke-width="1"/>
  <path d="M772 257.2 h2.4 v2.4 h-2.4z M775 257.8 l1.4 1.6 M776.4 257.8 l-1.4 1.6" stroke="#444" stroke-width=".8"/>
  <!-- fit -->
  <path d="M771 274.6 l2.3 2.4 M777.2 274.6 l-2.3 2.4 M771 280.2 l2.3 -2.4 M777.2 280.2 l-2.3 -2.4" stroke="#333" stroke-width="1.1"/>
  <!-- presentation -->
  <path d="M770.8 293.8 h7 v5 h-7 z M771.6 298.8 v2.4 l1.6 -1.2 M777 298.8 v2.4 l-1.6 -1.2" stroke="#444" stroke-width="1"/>
  <path d="M773.6 295.2 l2.4 1.3 l-2.4 1.3z" fill="#444" stroke="none"/>
  <!-- history -->
  <path d="M771.4 316.6 a3.4 3.4 0 1 0 .6 -2.6 M771 312.6 v1.9 h1.9 M774.4 314.2 v2.2 l1.4 1" stroke="#444" stroke-width="1"/>
  <!-- right list icons -->
  <g stroke="none">
    <rect x="858.4" y="162.6" width="2.4" height="2.8" fill="#555"/><rect x="861.1" y="162.6" width="2.4" height="2.8" fill="#3aa860"/><rect x="863.8" y="162.6" width="2.4" height="2.8" fill="#3a80e0"/>
    <rect x="858.4" y="165.8" width="2.4" height="2.8" fill="#d03a6a"/><rect x="861.1" y="165.8" width="2.4" height="2.8" fill="#f08a30"/><rect x="863.8" y="165.8" width="2.4" height="2.8" fill="#7a50b0"/>
  </g>
  <path d="M859.2 191.8 h1.8 v4.8 h3.8" stroke="#333" stroke-width=".9"/>
  <rect x="858" y="191" width="1.2" height="1.2" fill="#333" stroke="none"/><rect x="865" y="196" width="1.3" height="1.3" fill="#333" stroke="none"/>
  <path d="M858.8 205.5 h6.2 l1 1 v5.6 h-7.2z M858.8 207.6 h7.2" stroke="#444" stroke-width=".9"/>
  <!-- tab icons -->
  <g stroke="#444" stroke-width=".95">
    <rect x="798.6" y="226" width="3.2" height="3" rx=".5"/><rect x="803.2" y="226" width="3.2" height="3" rx=".5"/>
    <rect x="798.6" y="230.4" width="3.2" height="3" rx=".5"/><rect x="803.2" y="230.4" width="3.2" height="3" rx=".5"/>
  </g>
  <rect x="825.8" y="225.6" width="9" height="7.6" rx="1.2" fill="#777" stroke="none"/>
  <path d="M826.6 228.3 h7.4 M826.6 230.6 h7.4 M828.8 226.4 v6 M831.6 226.4 v6" stroke="#bbb" stroke-width=".55"/>
  <path d="M854 226.6 h2 v5.6 h3.4" stroke="#444" stroke-width=".9"/>
  <rect x="853" y="226" width="1.2" height="1.2" fill="#333" stroke="none"/><rect x="859.6" y="231.6" width="1.3" height="1.3" fill="#333" stroke="none"/>
  <!-- plus -->
  <path d="M844 259.5 v6 M841 262.5 h6" stroke="#333" stroke-width=".9"/>
  <!-- flowchart -->
  <g stroke="#444" stroke-width=".75" fill="#fff">
    <path d="M799.2 177.6 L807.8 172.2 L816.6 177.6 L807.8 183 Z"/>
    <rect x="800.8" y="192" width="14.4" height="11" rx="1.6"/>
    <path d="M826.2 180 h15 l-2.8 8.8 h-15z"/>
    <path d="M807.8 183 v6.5 M815.2 197.6 h16.6 v-6" fill="none" stroke="#333"/>
  </g>
  <path d="M806.4 189 l1.4 3 l1.4 -3z M830.4 191.2 l1.4 -2.8 l1.4 2.8z" fill="#222" stroke="none"/>
  <g font-family="Liberation Sans, sans-serif" font-size="4.3" fill="#333" stroke="none" text-anchor="middle">
    <text x="807.8" y="179.1">text</text>
    <text x="808" y="199">text</text>
    <text x="832.4" y="185.8">text</text>
    <text x="823.5" y="203" font-size="5.4">text</text>
  </g>
</svg>

<!-- focus -->
<div id="focus"></div>
<svg class="ic" style="left:0;top:0" width="930" height="500" viewBox="0 0 930 500" fill="none" stroke="#2558fa" stroke-width="1.1">
  <path d="M779.5 439 v-2.5 h2.5 M788.5 436.5 h2.5 v2.5 M791 447.5 v2.5 h-2.5 M782 450 h-2.5 v-2.5"/>
  <path d="M783 439.4 h3.6 l1.6 1.6 v5.7 h-5.2z" fill="#2558fa" stroke="none"/>
  <path transform="translate(0,.7)" d="M832.5 449 Q831.5 446.5 834.2 447.6 L856 458.3 Q859 460 856 461.3 L846 464.5 L841 473.5 Q839.4 476 838.6 473 Z" fill="#2558fa" stroke="#2558fa" stroke-width="1.2" stroke-linejoin="round"/>
</svg>
<div class="abs" style="left:798px;top:438.2px;font-size:11.2px;letter-spacing:.3px;color:#2558fa;-webkit-text-stroke:.25px #2558fa;white-space:nowrap">Focus</div>
</body></html>
